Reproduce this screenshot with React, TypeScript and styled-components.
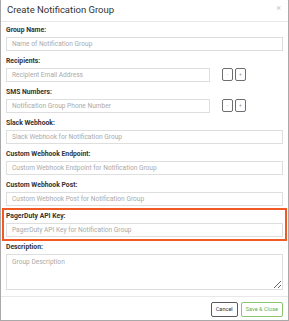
import styled, { createGlobalStyle } from "styled-components";

const GlobalStyle = createGlobalStyle`
  html, body {
    margin: 0;
    padding: 0;
    background: #fff;
  }
  body {
    font-family: Roboto, "Liberation Sans", Arial, sans-serif;
    color: #333;
  }
  * {
    box-sizing: border-box;
  }
`;

const Modal = styled.div`
  width: 289px;
  height: 321px;
  border: 1px solid #a9a9a9;
  border-top: none;
  background: #fff;
  display: flex;
  flex-direction: column;
`;

const Header = styled.div`
  height: 23px;
  display: flex;
  align-items: center;
  justify-content: space-between;
  padding: 0 7px 1px 6px;
  border-bottom: 1px solid #e8e8e8;
`;

const Title = styled.div`
  font-size: 9.5px;
  color: #333;
`;

const Close = styled.div`
  font-size: 9px;
  color: #c8c8c8;
  line-height: 1;
  margin-top: -3px;
`;

const Body = styled.div`
  padding: 4px 5px 0 5px;
  flex: 1;
`;

const Group = styled.div<{ $highlight?: boolean }>`
  margin-bottom: 6px;
  ${(p) =>
    p.$highlight &&
    `
    outline: 2px solid #f15a24;
    outline-offset: 2px;
  `}
`;

const Label = styled.div`
  font-size: 6.8px;
  font-weight: 700;
  line-height: 9px;
  margin-bottom: 2px;
  color: #333;
`;

const Input = styled.input<{ $narrow?: boolean }>`
  display: block;
  width: ${(p) => (p.$narrow ? "204px" : "100%")};
  height: 14px;
  border: 1px solid #dedede;
  padding: 0 5px;
  font-family: inherit;
  font-size: 6.6px;
  outline: none;
  &::placeholder {
    color: #aaa;
  }
`;

const Row = styled.div`
  display: flex;
  align-items: center;
`;

const SmallButtons = styled.div`
  display: flex;
  gap: 2px;
  margin-left: 12px;
`;

const SmallButton = styled.div`
  width: 11px;
  height: 13px;
  border: 1.5px solid #6e6e6e;
  border-radius: 2px;
  display: flex;
  align-items: center;
  justify-content: center;
  font-size: 5px;
  color: #999;
  line-height: 1;
`;

const TextArea = styled.textarea`
  display: block;
  width: 100%;
  height: 36px;
  border: 1px solid #dedede;
  padding: 3px 5px;
  font-family: inherit;
  font-size: 6.6px;
  outline: none;
  resize: vertical;
  &::placeholder {
    color: #aaa;
  }
`;

const Footer = styled.div`
  border-top: 1px solid #e8e8e8;
  height: 26px;
  display: flex;
  align-items: center;
  justify-content: flex-end;
  gap: 3px;
  padding: 2px 5px 0 0;
`;

const FooterButton = styled.div<{ $primary?: boolean }>`
  height: 15px;
  padding: 0 4px;
  display: flex;
  align-items: center;
  font-size: 5.6px;
  border-radius: 2px;
  border: 1.5px solid ${(p) => (p.$primary ? "#8cc56f" : "#5a5a5a")};
  color: ${(p) => (p.$primary ? "#6cb04a" : "#333")};
`;

const fields = [
  { label: "Group Name:", placeholder: "Name of Notification Group" },
  { label: "Recipients:", placeholder: "Recipient Email Address", list: true },
  { label: "SMS Numbers:", placeholder: "Notification Group Phone Number", list: true },
  { label: "Slack Webhook:", placeholder: "Slack Webhook for Notification Group" },
  { label: "Custom Webhook Endpoint:", placeholder: "Custom Webhook Endpoint for Notification Group" },
  { label: "Custom Webhook Post:", placeholder: "Custom Webhook Post for Notification Group" },
  { label: "PagerDuty API Key:", placeholder: "PagerDuty API Key for Notification Group", highlight: true },
];

const App = () => {
  return (
    <>
      <GlobalStyle />
      <Modal>
        <Header>
          <Title>Create Notification Group</Title>
          <Close>×</Close>
        </Header>
        <Body>
          {fields.map((f) => (
            <Group key={f.label} $highlight={f.highlight}>
              <Label>{f.label}</Label>
              {f.list ? (
                <Row>
                  <Input $narrow placeholder={f.placeholder} />
                  <SmallButtons>
                    <SmallButton>-</SmallButton>
                    <SmallButton>+</SmallButton>
                  </SmallButtons>
                </Row>
              ) : (
                <Input placeholder={f.placeholder} />
              )}
            </Group>
          ))}
          <Group>
            <Label>Description:</Label>
            <TextArea placeholder="Group Description" />
          </Group>
        </Body>
        <Footer>
          <FooterButton>Cancel</FooterButton>
          <FooterButton $primary>Save &amp; Close</FooterButton>
        </Footer>
      </Modal>
    </>
  );
};

export default App;
